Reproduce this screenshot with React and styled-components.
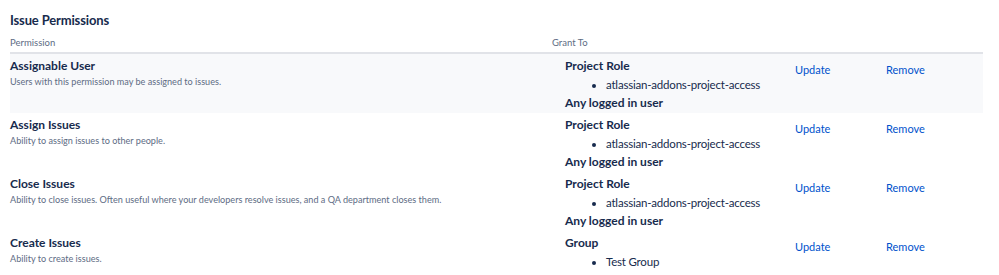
import React from "react";
import styled, { createGlobalStyle } from "styled-components";

const GlobalStyle = createGlobalStyle`
    body {
        margin: 0;
        background: #ffffff;
        font-family: Lato, "Noto Sans", sans-serif;
        color: #172b4d;
    }
`;

const permissions = [
    {
        name: "Assignable User",
        description: "Users with this permission may be assigned to issues.",
        grants: [
            { type: "Project Role", items: ["atlassian-addons-project-access"] },
            { type: "Any logged in user", items: [] },
        ],
    },
    {
        name: "Assign Issues",
        description: "Ability to assign issues to other people.",
        grants: [
            { type: "Project Role", items: ["atlassian-addons-project-access"] },
            { type: "Any logged in user", items: [] },
        ],
    },
    {
        name: "Close Issues",
        description:
            "Ability to close issues. Often useful where your developers resolve issues, and a QA department closes them.",
        grants: [
            { type: "Project Role", items: ["atlassian-addons-project-access"] },
            { type: "Any logged in user", items: [] },
        ],
    },
    {
        name: "Create Issues",
        description: "Ability to create issues.",
        grants: [{ type: "Group", items: ["Test Group"] }],
    },
];

function App() {
    return <Page>
        <GlobalStyle />
        <Title>Issue Permissions</Title>
        <Table>
            <HeadRow>
                <HeadCell>Permission</HeadCell>
                <HeadCell>Grant To</HeadCell>
                <HeadCell />
                <HeadCell />
            </HeadRow>
            {permissions.map((p, i) => (
                <Row key={p.name} $shaded={i === 0}>
                    <PermissionCell>
                        <PermName>{p.name}</PermName>
                        <PermDesc>{p.description}</PermDesc>
                    </PermissionCell>
                    <GrantCell>
                        {p.grants.map((g) => (
                            <div key={g.type}>
                                <GrantType>{g.type}</GrantType>
                                {g.items.length > 0 && (
                                    <GrantList>
                                        {g.items.map((it) => <li key={it}>{it}</li>)}
                                    </GrantList>
                                )}
                            </div>
                        ))}
                    </GrantCell>
                    <ActionCell><Link href="#">Update</Link></ActionCell>
                    <ActionCell><Link href="#">Remove</Link></ActionCell>
                </Row>
            ))}
        </Table>
    </Page>;
}

export default App;

const Page = styled.div`
    padding: 10px 16px 0 10px;
`;

const Title = styled.h2`
    margin: 0 0 3px 0;
    font-size: 13px;
    line-height: 20px;
    font-weight: 700;
    letter-spacing: -0.15px;
    color: #172b4d;
`;

const Table = styled.div`
    display: grid;
    grid-template-columns: 542px 243px 91px 1fr;
`;

const HeadRow = styled.div`
    display: contents;
`;

const HeadCell = styled.div`
    padding: 3px 0 2px 0;
    font-size: 9.5px;
    line-height: 14px;
    color: #5e6c84;
    border-bottom: 2px solid #e1e3e8;
`;

const Row = styled.div`
    display: contents;
    & > div {
        background: ${(p) => (p.$shaded ? "#f8f9fb" : "#ffffff")};
    }
`;

const PermissionCell = styled.div`
    padding: 3px 0 1px 0;
`;

const PermName = styled.div`
    font-size: 12px;
    line-height: 18px;
    font-weight: 700;
    color: #172b4d;
`;

const PermDesc = styled.div`
    font-size: 9.1px;
    line-height: 14px;
    color: #5e6c84;
`;

const GrantCell = styled.div`
    padding: 3px 0 1px 13px;
`;

const GrantType = styled.div`
    font-size: 12px;
    line-height: 18px;
    font-weight: 700;
    color: #172b4d;
`;

const GrantList = styled.ul`
    margin: 0;
    padding-left: 41px;
    font-size: 11.5px;
    line-height: 19px;
    letter-spacing: -0.2px;
    color: #172b4d;
`;

const ActionCell = styled.div`
    padding-top: 7px;
    font-size: 11px;
    line-height: 18px;
`;

const Link = styled.a`
    color: #0052cc;
    text-decoration: none;
`;
